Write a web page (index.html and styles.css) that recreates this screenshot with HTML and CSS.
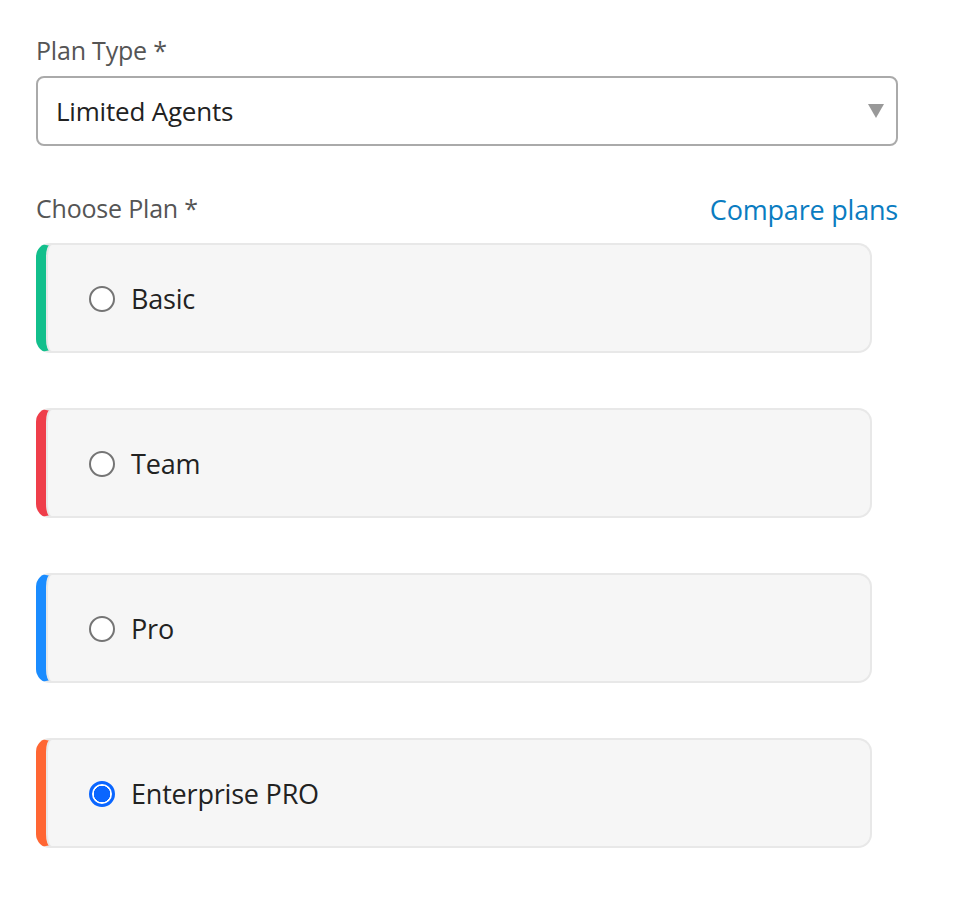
FILE: index.html
```html
<!DOCTYPE html>
<html>
<head>
<meta charset="utf-8">
<link rel="stylesheet" href="styles.css">
</head>
<body>
<div class="form">
  <div class="label">Plan Type *</div>
  <div class="select">
    <span class="select-value">Limited Agents</span>
    <span class="arrow"></span>
  </div>
  <div class="row">
    <div class="label">Choose Plan *</div>
    <a class="link">Compare plans</a>
  </div>
  <div class="cards">
    <div class="card basic"><span class="radio"></span><span class="name">Basic</span></div>
    <div class="card team"><span class="radio"></span><span class="name">Team</span></div>
    <div class="card pro"><span class="radio"></span><span class="name">Pro</span></div>
    <div class="card ent"><span class="radio checked"></span><span class="name">Enterprise PRO</span></div>
  </div>
</div>
</body>
</html>
```
FILE: styles.css
```css
html, body { margin: 0; padding: 0; background: #fff; }
body { font-family: "Open Sans", "Lato", sans-serif; }
.form { padding: 34px 0 0 36px; width: 862px; }
.label { font-size: 25px; color: #555; line-height: 32px; letter-spacing: -0.2px; }
.select {
  margin-top: 10px;
  height: 70px;
  box-sizing: border-box;
  border: 2px solid #aaa;
  border-radius: 8px;
  display: flex;
  align-items: center;
  padding-left: 18px;
  padding-right: 12px;
  justify-content: space-between;
}
.select-value { font-size: 26px; color: #222; letter-spacing: -0.2px; }
.arrow {
  width: 0; height: 0;
  border-left: 8px solid transparent;
  border-right: 8px solid transparent;
  border-top: 14px solid #999;
}
.row {
  display: flex; justify-content: space-between; align-items: center;
  margin-top: 44px;
}
.link { font-size: 27px; color: #0a7cc1; line-height: 32px; margin-top: 4px; letter-spacing: -0.2px; }
.cards { margin-top: 17px; display: flex; flex-direction: column; gap: 55px; width: 836px; }
.card {
  height: 110px;
  box-sizing: border-box;
  background: #f6f6f6;
  border: 2px solid #e8e8e8;
  border-left-width: 10px;
  border-radius: 14px;
  box-shadow: inset 2px 0 0 #e8e8e8;
  display: flex; align-items: center;
  padding-left: 43px;
}
.basic { border-left-color: #12bf8c; }
.team { border-left-color: #ef3e4a; }
.pro { border-left-color: #1a8cff; }
.ent { border-left-color: #ff6633; }
.radio {
  width: 26px; height: 26px; box-sizing: border-box;
  border: 2px solid #757575; border-radius: 50%;
  background: #fff;
  margin-right: 16px;
  margin-top: 2px;
}
.radio.checked {
  border: 3px solid #0a66ff;
  background: radial-gradient(circle, #0a66ff 0 8px, #fff 8.5px);
}
.name { font-size: 27px; color: #222; letter-spacing: -0.2px; }
```
